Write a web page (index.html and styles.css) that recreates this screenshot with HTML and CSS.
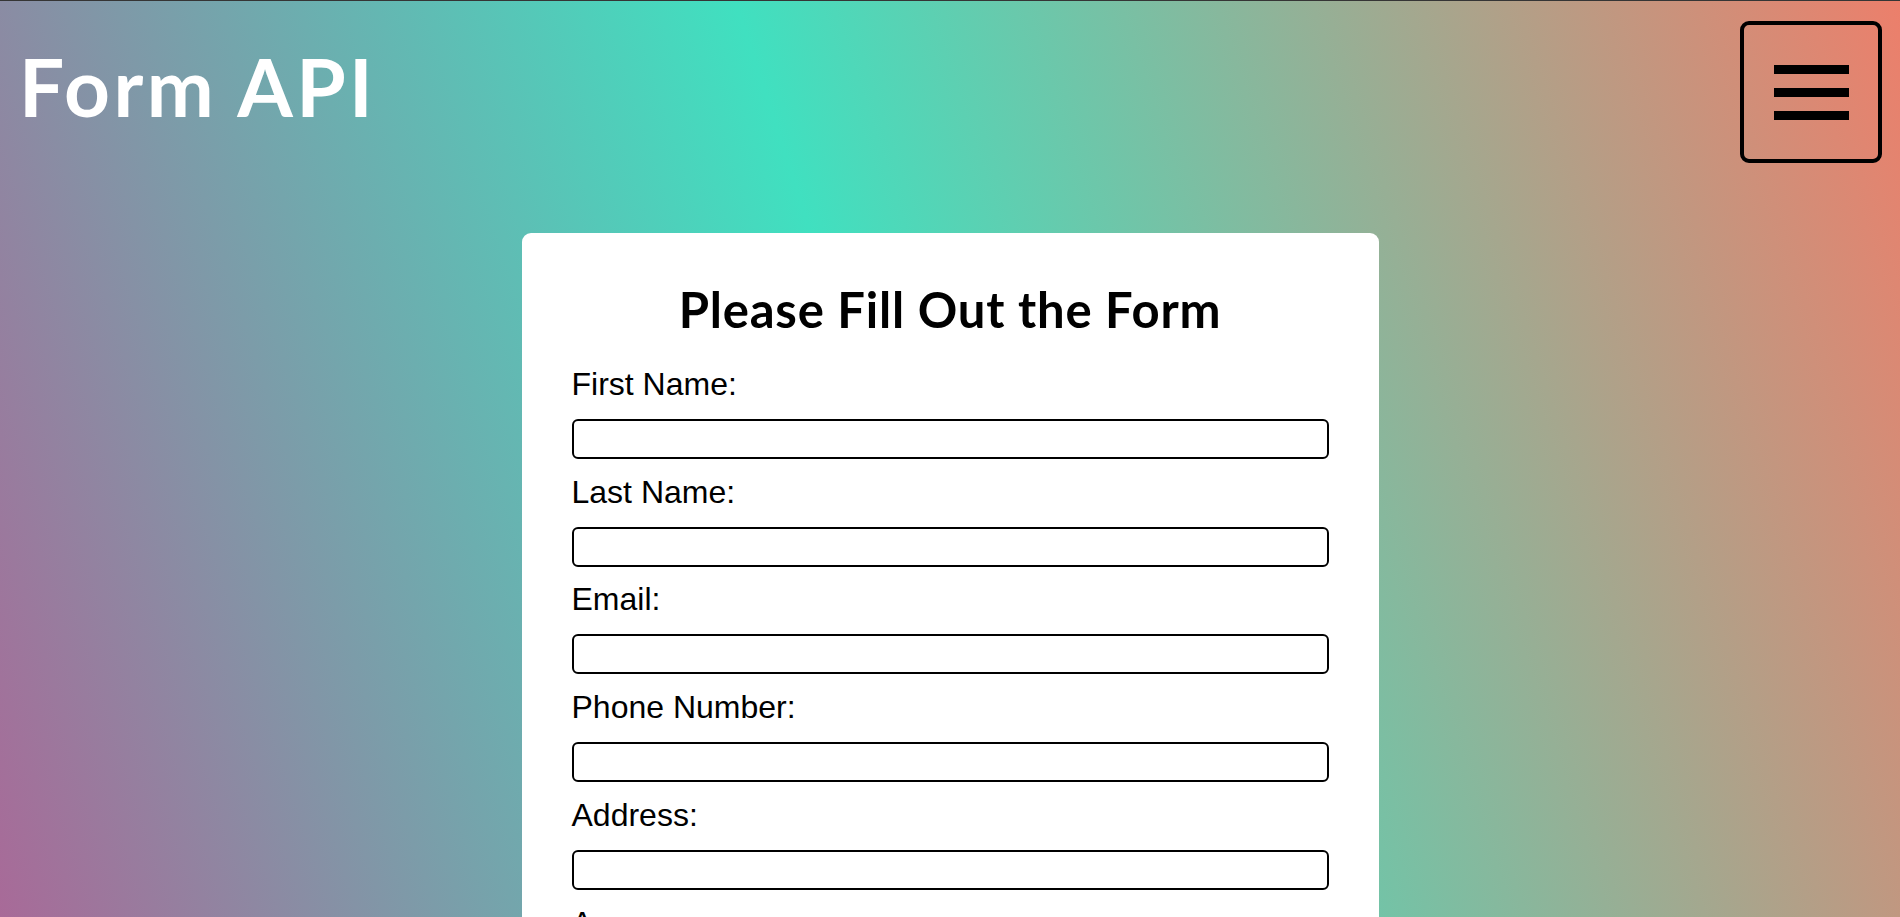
FILE: index.html
```html
<!DOCTYPE html>
<html lang="en">
<head>
<meta charset="utf-8">
<title>Form API</title>
<link rel="stylesheet" href="styles.css">
</head>
<body>
<header class="topbar">
  <h1 class="brand">Form API</h1>
  <button class="menu-btn" type="button" aria-label="Menu">
    <span class="bar"></span>
    <span class="bar"></span>
    <span class="bar"></span>
  </button>
</header>
<main class="page">
  <form class="card">
    <h2 class="card-title">Please Fill Out the Form</h2>
    <label class="field-label" for="first">First Name:</label>
    <input class="field-input" id="first" type="text">
    <label class="field-label" for="last">Last Name:</label>
    <input class="field-input" id="last" type="text">
    <label class="field-label" for="email">Email:</label>
    <input class="field-input" id="email" type="email">
    <label class="field-label" for="phone">Phone Number:</label>
    <input class="field-input" id="phone" type="tel">
    <label class="field-label" for="address">Address:</label>
    <input class="field-input" id="address" type="text">
    <label class="field-label" for="age">Age:</label>
    <input class="field-input" id="age" type="number">
    <button class="submit-btn" type="submit">Submit</button>
  </form>
</main>
</body>
</html>
```

FILE: styles.css
```css
html {
  border-top: 1px solid #353535;
}

body {
  margin: 0;
  min-height: 100vh;
  font-family: "Liberation Sans", Arial, sans-serif;
  background: linear-gradient(72deg, #a86a98 0%, #40e0c0 47%, #ec7f6b 100%);
  background-attachment: fixed;
}

.topbar {
  display: flex;
  justify-content: space-between;
  align-items: flex-start;
  padding: 20px 18px 0 19px;
}

.brand {
  margin: 17px 0 0;
  font-family: Lato, "Noto Sans", sans-serif;
  font-weight: 700;
  font-size: 80px;
  line-height: 96px;
  letter-spacing: 3.4px;
  color: #ffffff;
}

.menu-btn {
  width: 142px;
  height: 142px;
  box-sizing: border-box;
  border: 4px solid #000000;
  border-radius: 9px;
  background: transparent;
  padding: 0;
  display: flex;
  flex-direction: column;
  align-items: center;
  justify-content: center;
  gap: 14px;
  cursor: pointer;
}

.bar {
  display: block;
  width: 75px;
  height: 9px;
  background: #000000;
}

.page {
  display: flex;
  justify-content: center;
  padding-top: 70px;
  padding-bottom: 60px;
}

.card {
  width: 857px;
  box-sizing: border-box;
  background: #ffffff;
  border-radius: 9px;
  padding: 47px 50px 50px;
  display: flex;
  flex-direction: column;
}

.card-title {
  margin: 0 0 27px;
  text-align: center;
  font-family: Lato, "Noto Sans", sans-serif;
  font-weight: 700;
  font-size: 49px;
  line-height: 1.2;
  letter-spacing: 0.8px;
  color: #000000;
}

.field-label {
  display: block;
  font-size: 32px;
  line-height: 36px;
  color: #000000;
  margin-bottom: 17px;
}

.field-input {
  display: block;
  width: 100%;
  height: 40px;
  box-sizing: border-box;
  border: 2px solid #000000;
  border-radius: 6px;
  margin: 0 0 14.8px;
  padding: 0 10px;
  font-size: 20px;
  font-family: "Liberation Sans", Arial, sans-serif;
  background: #ffffff;
}

.submit-btn {
  margin-top: 20px;
  align-self: center;
  font-size: 28px;
  padding: 10px 40px;
  border: 2px solid #000000;
  border-radius: 6px;
  background: #ffffff;
  font-family: "Liberation Sans", Arial, sans-serif;
}
```
